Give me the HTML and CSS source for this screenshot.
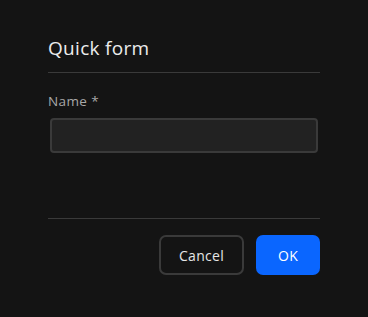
FILE: index.html
```html
<!DOCTYPE html>
<html lang="en">

<head>
    <meta charset="UTF-8">
    <title>Quick form</title>
    <link rel="stylesheet" href="styles.css">
</head>

<body>
    <div class="dialog">
        <div class="dialog-header">
            <h1>Quick form</h1>
        </div>

        <div class="dialog-body">
            <label for="name">Name *</label>
            <input type="text" id="name">
        </div>

        <div class="dialog-footer">
            <button class="btn btn-cancel">Cancel</button>
            <button class="btn btn-ok">OK</button>
        </div>
    </div>
</body>

</html>
```

FILE: styles.css
```css
body {
    margin: 0;
    background-color: #141414;
    font-family: "Open Sans", "Liberation Sans", sans-serif;
    color: #e6e6e6;
}

.dialog {
    width: 272px;
    padding: 36px 48px 0;
}

.dialog-header {
    padding-bottom: 12px;
    border-bottom: 1px solid #3a3a3a;
}

.dialog-header h1 {
    margin: 0;
    font-size: 19px;
    font-weight: 400;
    line-height: 24px;
    letter-spacing: 0.3px;
    color: #ececec;
}

.dialog-body {
    display: flex;
    flex-direction: column;
    padding: 20px 0 65px;
    border-bottom: 1px solid #3a3a3a;
}

.dialog-body label {
    font-size: 13.5px;
    font-weight: 500;
    line-height: 16px;
    letter-spacing: 0.4px;
    color: #a8a8a8;
}

.dialog-body input {
    box-sizing: border-box;
    height: 35px;
    margin: 9px 2px 0;
    background-color: #222;
    border: 2px solid #3a3a3a;
    border-radius: 4px;
    color: #e6e6e6;
    outline: none;
}

.dialog-footer {
    display: flex;
    justify-content: flex-end;
    gap: 12px;
    padding-top: 16px;
}

.btn {
    box-sizing: border-box;
    height: 40px;
    border-radius: 7px;
    font-family: inherit;
    font-size: 14px;
    letter-spacing: 0.3px;
    cursor: pointer;
}

.btn-cancel {
    width: 85px;
    background-color: transparent;
    border: 2px solid #3a3a3a;
    color: #e6e6e6;
}

.btn-ok {
    width: 64px;
    background-color: #0a66ff;
    border: none;
    color: #fff;
}
```
